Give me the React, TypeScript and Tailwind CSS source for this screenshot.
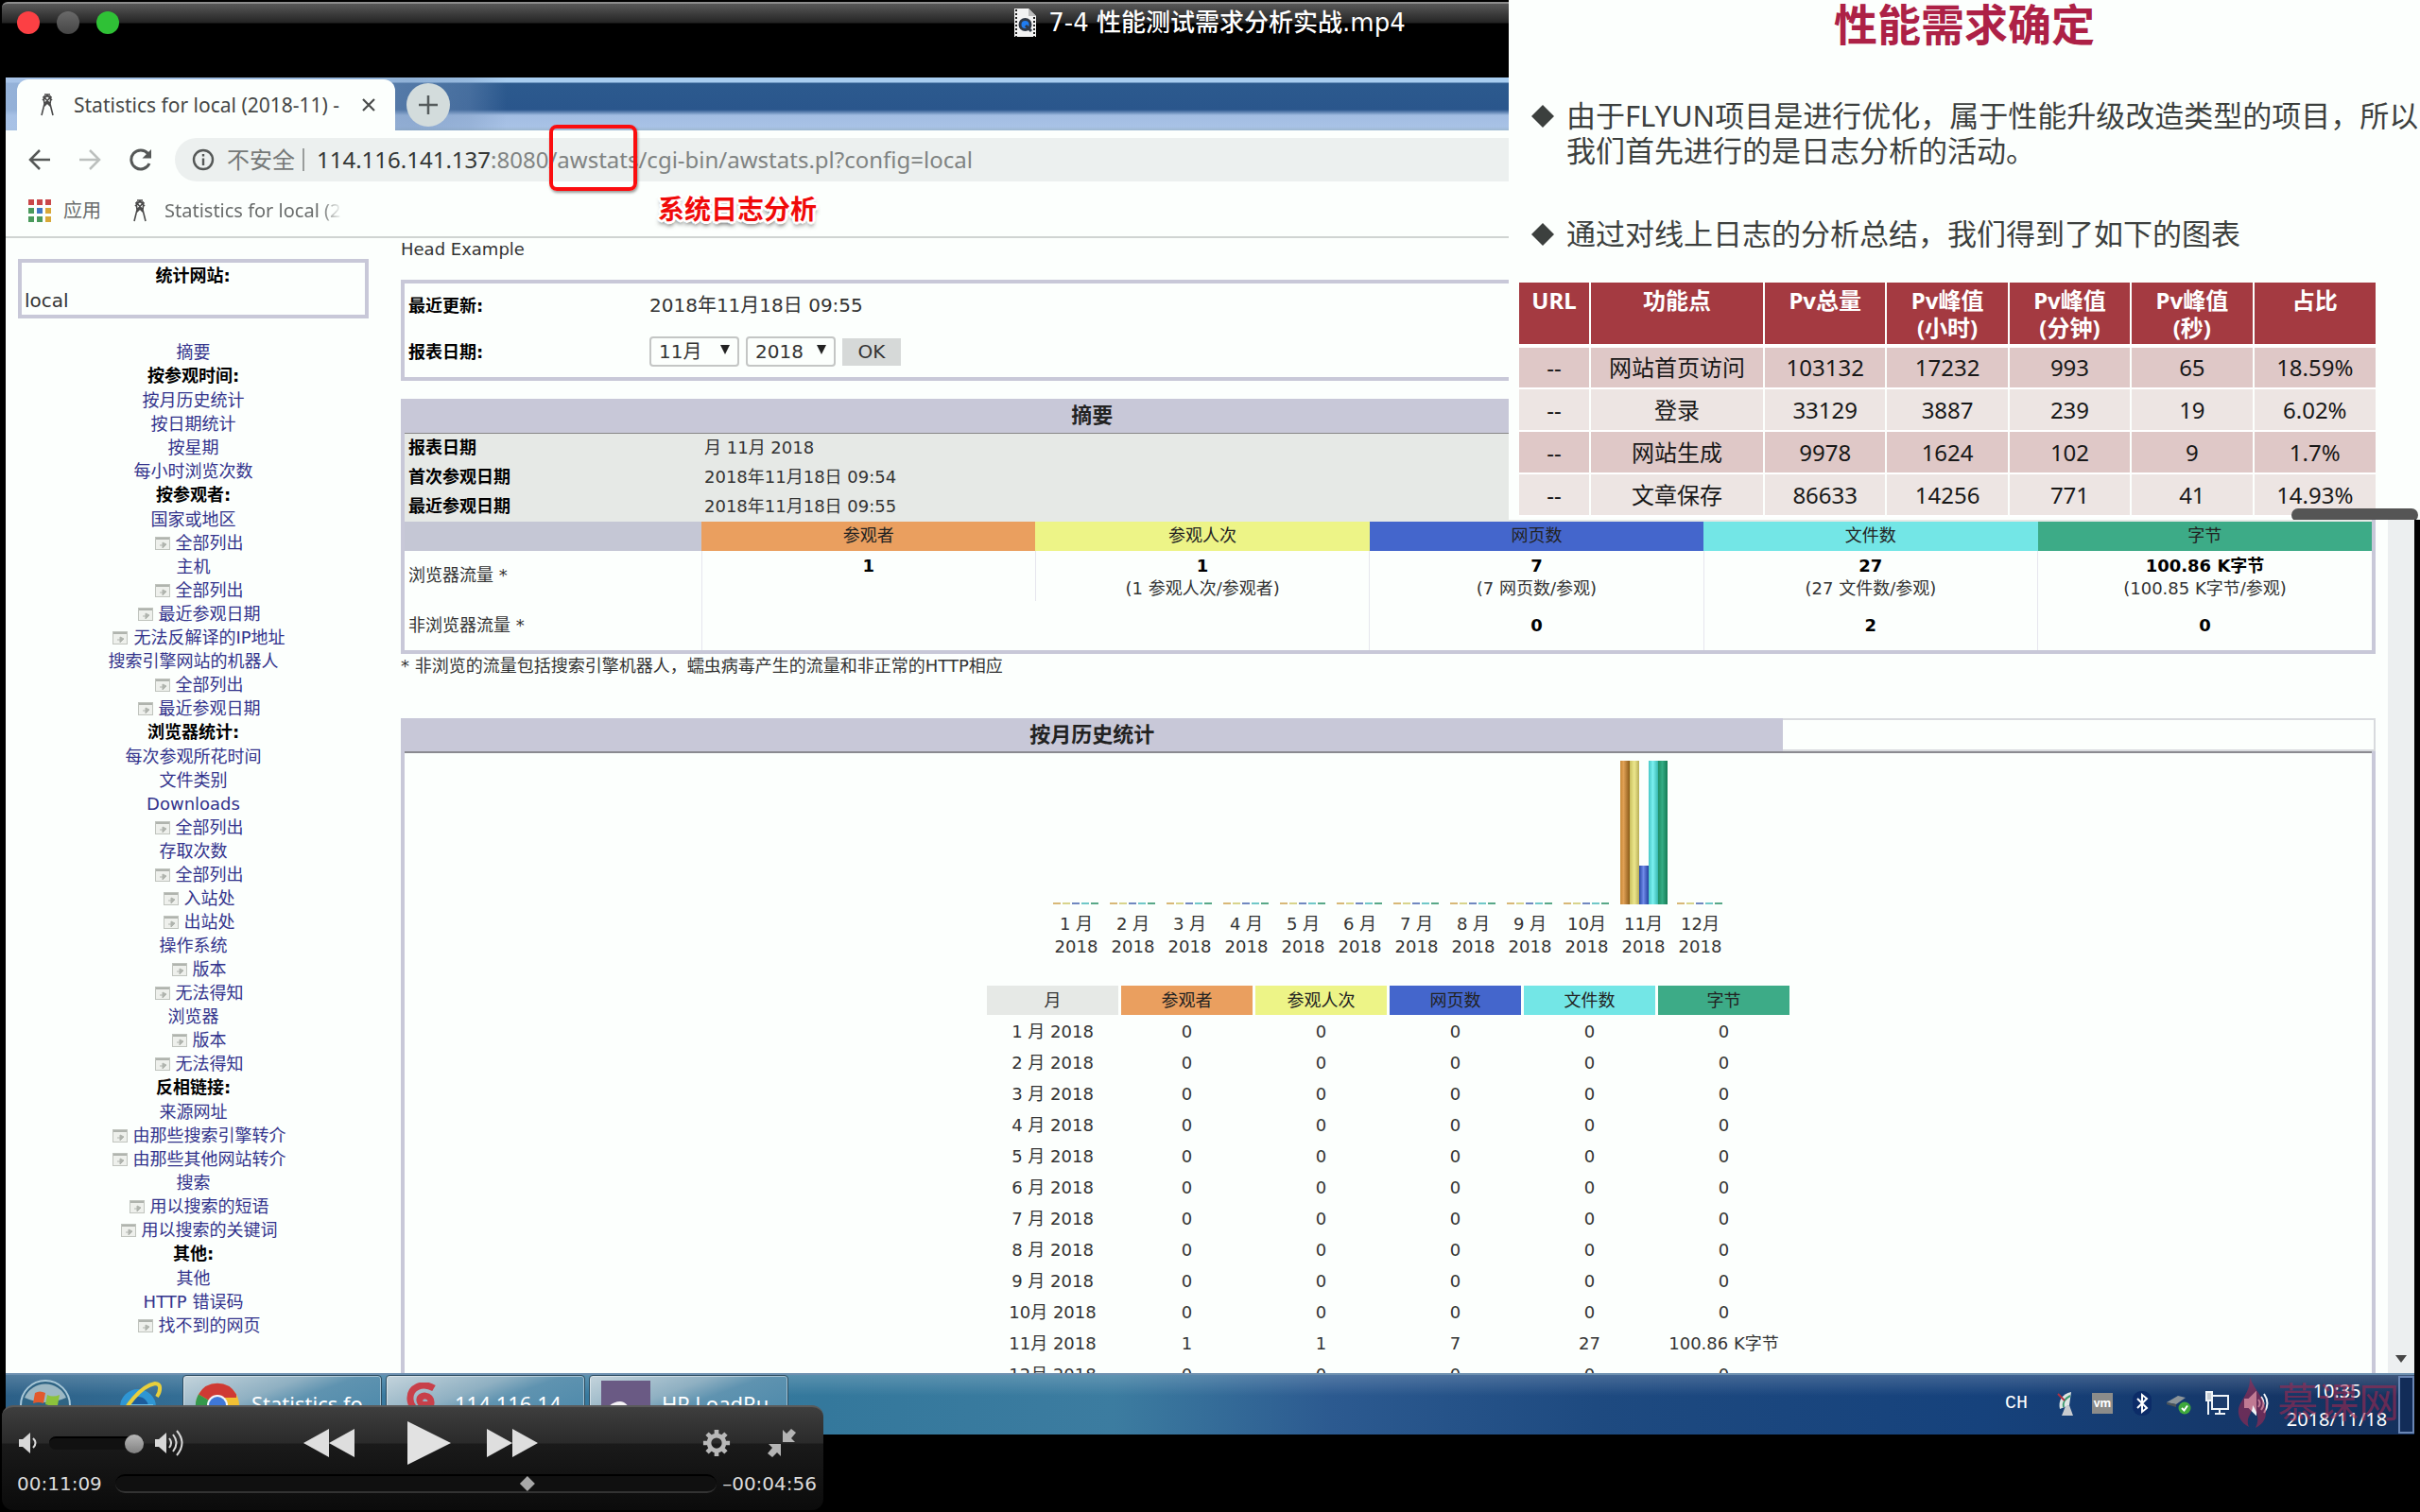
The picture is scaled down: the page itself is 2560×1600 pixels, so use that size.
import React from "react";

const CJK = "font-['DejaVu_Sans','Noto_Sans_CJK_SC',sans-serif]";
const UI = "font-['Noto_Sans','Noto_Sans_CJK_SC',sans-serif]";

type NavItem = { text: string; kind: "link" | "head" | "sub" };

const nav: NavItem[] = [
  { text: "摘要", kind: "link" },
  { text: "按参观时间:", kind: "head" },
  { text: "按月历史统计", kind: "link" },
  { text: "按日期统计", kind: "link" },
  { text: "按星期", kind: "link" },
  { text: "每小时浏览次数", kind: "link" },
  { text: "按参观者:", kind: "head" },
  { text: "国家或地区", kind: "link" },
  { text: "全部列出", kind: "sub" },
  { text: "主机", kind: "link" },
  { text: "全部列出", kind: "sub" },
  { text: "最近参观日期", kind: "sub" },
  { text: "无法反解译的IP地址", kind: "sub" },
  { text: "搜索引擎网站的机器人", kind: "link" },
  { text: "全部列出", kind: "sub" },
  { text: "最近参观日期", kind: "sub" },
  { text: "浏览器统计:", kind: "head" },
  { text: "每次参观所花时间", kind: "link" },
  { text: "文件类别", kind: "link" },
  { text: "Downloads", kind: "link" },
  { text: "全部列出", kind: "sub" },
  { text: "存取次数", kind: "link" },
  { text: "全部列出", kind: "sub" },
  { text: "入站处", kind: "sub" },
  { text: "出站处", kind: "sub" },
  { text: "操作系统", kind: "link" },
  { text: "版本", kind: "sub" },
  { text: "无法得知", kind: "sub" },
  { text: "浏览器", kind: "link" },
  { text: "版本", kind: "sub" },
  { text: "无法得知", kind: "sub" },
  { text: "反相链接:", kind: "head" },
  { text: "来源网址", kind: "link" },
  { text: "由那些搜索引擎转介", kind: "sub" },
  { text: "由那些其他网站转介", kind: "sub" },
  { text: "搜索", kind: "link" },
  { text: "用以搜索的短语", kind: "sub" },
  { text: "用以搜索的关键词", kind: "sub" },
  { text: "其他:", kind: "head" },
  { text: "其他", kind: "link" },
  { text: "HTTP 错误码", kind: "link" },
  { text: "找不到的网页", kind: "sub" },
];

const months = ["1 月", "2 月", "3 月", "4 月", "5 月", "6 月", "7 月", "8 月", "9 月", "10月", "11月", "12月"];

const metrics = [
  { name: "参观者", bg: "bg-[#ea9f5f]" },
  { name: "参观人次", bg: "bg-[#edf487]" },
  { name: "网页数", bg: "bg-[#4466cc]" },
  { name: "文件数", bg: "bg-[#73e6e6]" },
  { name: "字节", bg: "bg-[#3dab87]" },
];

const bars = [
  { height: 152, cls: "bg-[linear-gradient(90deg,#c98a38,#e0a055_35%,#8a5a18)]" },
  { height: 152, cls: "bg-[linear-gradient(90deg,#c9c060,#ece68c_50%,#b8ae58)]" },
  { height: 41, cls: "bg-[linear-gradient(90deg,#2a48a8,#6f8be8_45%,#2540a0)]" },
  { height: 152, cls: "bg-[linear-gradient(90deg,#48c8c8,#7af0f0_45%,#38b8b0)]" },
  { height: 152, cls: "bg-[linear-gradient(90deg,#1f8f66,#34ac84_45%,#157a54)]" },
];

const stubs = ["bg-[#d8b878]", "bg-[#d8d48c]", "bg-[#7088c0]", "bg-[#70c8c8]", "bg-[#58a888]"];

const slideHead = [
  ["URL"],
  ["功能点"],
  ["Pv总量"],
  ["Pv峰值", "(小时)"],
  ["Pv峰值", "(分钟)"],
  ["Pv峰值", "(秒)"],
  ["占比"],
];

const slideRows = [
  ["--", "网站首页访问", "103132", "17232", "993", "65", "18.59%"],
  ["--", "登录", "33129", "3887", "239", "19", "6.02%"],
  ["--", "网站生成", "9978", "1624", "102", "9", "1.7%"],
  ["--", "文章保存", "86633", "14256", "771", "41", "14.93%"],
];

function Tower({ className }: { className: string }) {
  return (
    <svg className={className} viewBox="0 0 16 24" fill="none" stroke="#4a4a4a" strokeWidth="1.600">
      <path d="M4 3 H12 M4 3 L5 11 L2 23 M12 3 L11 11 L14 23 M4 3 L11 11 M12 3 L5 11 M5 1 H11 M3 7 L8 2 L13 7 M5 11 L8 9 L11 11 M4 14 L8 10 L12 14" />
    </svg>
  );
}

function WindowIcon() {
  return (
    <svg className="h-[14px] w-[16px]" viewBox="0 0 16 14" fill="none">
      <rect x="0.500" y="0.500" width="15" height="13" fill="#eef0ec" stroke="#c0c4be" />
      <path d="M1 2 H15" stroke="#b0b4ae" strokeWidth="2" />
      <path d="M5 9 H9 M8 6 V12 L12 8 Z" stroke="#b0b4ae" fill="#b0b4ae" />
    </svg>
  );
}

function TitleBar() {
  return (
    <header className="h-[82px] shrink-0 bg-black px-[2px] pt-[2px]">
      <div className="flex h-[42px] items-center rounded-tl-md border-t-2 border-[#8c8c8c] bg-[linear-gradient(#585858,#242424_20px,#000_21px)] px-4">
        <div className="flex flex-1 gap-[18px]">
          <button aria-label="关闭" className="size-6 rounded-full bg-[#fc4044]" />
          <button aria-label="最小化" className="size-6 rounded-full bg-[linear-gradient(#6a6a6a,#454545)]" />
          <button aria-label="全屏" className="size-6 rounded-full bg-[#2fc136]" />
        </div>
        <div className="flex items-center gap-[13px]">
          <svg className="h-[30px] w-[23px]" viewBox="0 0 23 30">
            <path d="M0 0 H15 L23 8 V30 H0 Z" fill="#f2f2f2" />
            <path d="M15 0 V8 H23 Z" fill="#bdbdbd" />
            <path d="M2 1 V30 M21 9 V30" stroke="#222" strokeWidth="2" strokeDasharray="2 2" />
            <circle cx="11.500" cy="17" r="7" fill="#303844" />
            <circle cx="11.500" cy="17" r="4" fill="#1f7cf0" />
            <path d="M12 18 L18 24" stroke="#303844" strokeWidth="3" />
          </svg>
          <h1 className={`${CJK} text-[26px] leading-[38px] font-medium whitespace-nowrap text-white`}>
            7-4 性能测试需求分析实战.mp4
          </h1>
        </div>
        <div className="flex-1" />
      </div>
    </header>
  );
}

function TabStrip() {
  return (
    <div className="flex h-[56px] shrink-0 items-end bg-[linear-gradient(90deg,rgba(168,194,230,0.85)_0,rgba(120,150,190,0.5)_430px,rgba(120,150,190,0.35)_490px,transparent_530px),linear-gradient(#a8cdf0_0,#a8cdf0_5px,#2c5a8e_6px,#2a568c_34px,#a2bde2_40px,#a8c2e6_52px,#9db8d0_56px)] pl-[12px]">
      <div className="flex h-[54px] w-[400px] items-center rounded-t-xl bg-[#fcfffd] pr-4 pl-6">
        <Tower className="h-[24px] w-[16px]" />
        <span className={`${UI} ml-[20px] flex-1 text-[21px] leading-7 whitespace-nowrap text-[#454746]`}>
          Statistics for local (2018-11) -
        </span>
        <button aria-label="关闭标签页" className="flex size-6 items-center justify-center">
          <svg className="size-4" viewBox="0 0 16 16" stroke="#4a4c4b" strokeWidth="2.200">
            <path d="M2 2 L14 14 M14 2 L2 14" />
          </svg>
        </button>
      </div>
      <button aria-label="新标签页" className="mb-1 ml-3 flex size-[46px] items-center justify-center rounded-full bg-[#d3dcdc]">
        <svg className="size-5" viewBox="0 0 20 20" stroke="#555b5c" strokeWidth="2.500">
          <path d="M10 0 V20 M0 10 H20" />
        </svg>
      </button>
    </div>
  );
}

function Toolbar() {
  return (
    <div className="relative shrink-0 border-b-2 border-[#d0d4d2] bg-[#fcfffd] pb-[2px]">
      <div className="flex h-[62px] items-center pl-6">
        <button aria-label="后退">
          <svg className="size-6" viewBox="0 0 24 24" fill="none" stroke="#555857" strokeWidth="2.500">
            <path d="M23 12 H3 M12 2 L2 12 L12 22" />
          </svg>
        </button>
        <button aria-label="前进" className="ml-[29px]">
          <svg className="size-6" viewBox="0 0 24 24" fill="none" stroke="#bcc0be" strokeWidth="2.500">
            <path d="M1 12 H21 M12 2 L22 12 L12 22" />
          </svg>
        </button>
        <button aria-label="重新加载" className="ml-[30px]">
          <svg className="size-6" viewBox="0 0 24 24" fill="none" stroke="#555857" strokeWidth="3">
            <path d="M21 16 A10 10 0 1 1 19.500 5.500" />
            <path d="M23 1 V10.500 H13.500 Z" fill="#555857" stroke="none" />
          </svg>
        </button>
        <div className={`${UI} ml-6 flex h-[46px] flex-1 items-center rounded-l-full bg-[#ecf0ef] pl-[18px] text-[24px] leading-8`}>
          <svg className="size-6" viewBox="0 0 24 24" fill="none" stroke="#555857" strokeWidth="2.400">
            <circle cx="12" cy="12" r="10" />
            <path d="M12 10.500 V18 M12 6 V8.500" />
          </svg>
          <span className="ml-[13px] text-[#757877]">不安全</span>
          <span className="mx-[8px] h-6 w-[2px] bg-[#9a9d9c]" />
          <label htmlFor="address" className="ml-[5px] text-[#333635]">
            114.116.141.137
          </label>
          <input
            id="address"
            className="w-[600px] bg-transparent text-[#808382] outline-none"
            defaultValue=":8080/awstats/cgi-bin/awstats.pl?config=local"
          />
        </div>
      </div>
      <div className={`${UI} flex h-[46px] items-center pl-6 text-[20px] leading-7 text-[#6a6d6c]`}>
        <svg className="size-6" viewBox="0 0 24 24">
          <path d="M0 0h6v6H0zM9 0h6v6H9zM18 0h6v6h-6z" fill="#c9484a" />
          <path d="M0 9h6v6H0z" fill="#4a9a5c" />
          <path d="M9 9h6v6H9z" fill="#3f78c4" />
          <path d="M18 9h6v6h-6z" fill="#d8a838" />
          <path d="M0 18h6v6H0zM9 18h6v6H9z" fill="#4a9a5c" />
          <path d="M18 18h6v6h-6z" fill="#d8a838" />
        </svg>
        <a href="#apps" className="ml-[13px]">应用</a>
        <Tower className="ml-[33px] h-6 w-4" />
        <a
          href="#stats"
          className="ml-[18px] w-[188px] overflow-hidden [mask-image:linear-gradient(90deg,#000_165px,transparent)] whitespace-nowrap"
        >
          Statistics for local (2
        </a>
      </div>
      <div className="h-[2px]" />
      <div className="absolute top-[-6px] left-[575px] h-[70px] w-[93px] rounded-lg border-4 border-[#fb0d0f] shadow-[1px_2px_3px_rgba(0,0,0,0.4)]" />
      <span
        className={`${UI} absolute top-[63px] left-[690px] text-[28px] leading-10 font-bold text-[#f00a0a] [text-shadow:3px_0_#fff,-3px_0_#fff,0_3px_#fff,0_-3px_#fff,2px_2px_#fff,-2px_-2px_#fff,2px_-2px_#fff,-2px_2px_#fff,0_4px_5px_rgba(0,0,0,0.8)]`}
      >
        系统日志分析
      </span>
    </div>
  );
}

function Sidebar() {
  return (
    <aside className="w-[418px] shrink-0 pt-[22px] pr-[34px] pl-[13px]">
      <div className="h-[63px] border-4 border-[#c8c8d8] pr-1 pl-[3px]">
        <div className="text-center leading-[27px] font-bold text-black">统计网站:</div>
        <div className="text-[20px] leading-[27px]">local</div>
      </div>
      <ul className="pt-[23px] text-center">
        {nav.map((item, i) =>
          item.kind === "head" ? (
            <li key={i} className="leading-[26px] font-bold text-black">
              {item.text}
            </li>
          ) : (
            <li key={i} className="leading-[25px]">
              {item.kind === "sub" ? (
                <a href="#report" className="flex items-center justify-center gap-[6px] pl-3 text-[#33338c]">
                  <WindowIcon />
                  {item.text}
                </a>
              ) : (
                <a href="#report" className="text-[#33338c]">
                  {item.text}
                </a>
              )}
            </li>
          ),
        )}
      </ul>
    </aside>
  );
}

function Picker({ id, label, value }: { id: string; label: string; value: string }) {
  return (
    <span className="relative">
      <select
        id={id}
        aria-label={label}
        defaultValue={value}
        className="h-[32px] w-[95px] appearance-none rounded-sm border-2 border-[#c4c6c5] bg-[#fcfffd] pl-2 text-[20px] leading-6"
      >
        <option>{value}</option>
      </select>
      <svg className="pointer-events-none absolute top-[9px] right-[10px] h-[10px] w-[10px]" viewBox="0 0 10 10">
        <path d="M0 0 H10 L5 10 Z" fill="#222" />
      </svg>
    </span>
  );
}

function Summary() {
  const row1 = [
    ["1", ""],
    ["1", "(1 参观人次/参观者)"],
    ["7", "(7 网页数/参观)"],
    ["27", "(27 文件数/参观)"],
    ["100.86 K字节", "(100.85 K字节/参观)"],
  ];
  return (
    <section className="mt-[19px]">
      <h2 className="h-[36px] w-[70%] bg-[#c8c8d8] text-center text-[22px] leading-[36px] font-bold text-[#222]">摘要</h2>
      <div className="border-x-4 border-b-4 border-[#c8c8d8]">
        <table className="w-full table-fixed border-collapse border-t border-[#888]">
          <colgroup>
            <col className="w-[314px]" />
            <col />
            <col />
            <col />
            <col />
            <col />
          </colgroup>
          <tbody>
            {[
              ["报表日期", "月 11月 2018"],
              ["首次参观日期", "2018年11月18日 09:54"],
              ["最近参观日期", "2018年11月18日 09:55"],
            ].map(([a, b]) => (
              <tr key={a} className="h-[31px] bg-[#e6e9e6] leading-[30px]">
                <th scope="row" className="pl-[4px] text-left font-bold text-black">
                  {a}
                </th>
                <td colSpan={5} className="pl-[3px]">
                  {b}
                </td>
              </tr>
            ))}
            <tr className="h-[31px] leading-[30px]">
              <td className="bg-[#c5c7d5]" />
              {metrics.map((m) => (
                <th key={m.name} scope="col" className={`${m.bg} font-normal text-[#222]`}>
                  {m.name}
                </th>
              ))}
            </tr>
            <tr className="h-[53px] leading-[24px]">
              <td className="pl-[4px]">浏览器流量 *</td>
              {row1.map(([a, b], i) => (
                <td key={i} className="border-l border-[#e6e6ee] pt-[4px] text-center align-top">
                  <b className="text-black">{a}</b>
                  <div>{b}</div>
                </td>
              ))}
            </tr>
            <tr className="h-[52px]">
              <td className="pl-[4px]">非浏览器流量 *</td>
              <td colSpan={2} className="border-l border-[#e6e6ee]" />
              {["0", "2", "0"].map((v, i) => (
                <td key={i} className="border-l border-[#e6e6ee] text-center font-bold text-black">
                  {v}
                </td>
              ))}
            </tr>
          </tbody>
        </table>
      </div>
      <p className="leading-[26px]">* 非浏览的流量包括搜索引擎机器人，蠕虫病毒产生的流量和非正常的HTTP相应</p>
    </section>
  );
}

function Monthly() {
  return (
    <section className="mt-[42px]">
      <div className="flex h-[35px]">
        <h2 className="w-[70%] bg-[#c8c8d8] text-center text-[22px] leading-[36px] font-bold text-[#222]">按月历史统计</h2>
        <div className="flex-1 border-2 border-l-0 border-[#d8dade]" />
      </div>
      <div className="flex flex-col items-center border-x-4 border-[#c8c8d8]">
        <div className="h-[2px] w-full bg-[#8a8a90]" />
        <div className="mt-[8px] flex">
          {months.map((m) => (
            <div key={m} className="flex w-[60px] flex-col items-center leading-[24px]">
              <div className="flex h-[152px] items-end">
                {m === "11月"
                  ? bars.map((b, i) => <span key={i} className={`${b.cls} w-[10px]`} style={{ height: b.height }} />)
                  : stubs.map((s, i) => <span key={i} className={`${s} mr-[2px] h-[2px] w-[8px]`} />)}
              </div>
              <span className="mt-[9px]">{m}</span>
              <span>2018</span>
            </div>
          ))}
        </div>
        <table className="mt-[26px] table-fixed border-separate border-spacing-[3px] text-center">
          <thead>
            <tr className="h-[31px]">
              <th className="w-[139px] bg-[#e6e9e6] font-normal">月</th>
              {metrics.map((m) => (
                <th key={m.name} className={`${m.bg} w-[139px] font-normal text-[#222]`}>
                  {m.name}
                </th>
              ))}
            </tr>
          </thead>
          <tbody>
            {months.map((m) => (
              <tr key={m} className="h-[30px] leading-[28px]">
                <td>{m} 2018</td>
                {(m === "11月" ? ["1", "1", "7", "27", "100.86 K字节"] : ["0", "0", "0", "0", "0"]).map((v, i) => (
                  <td key={i}>{v}</td>
                ))}
              </tr>
            ))}
          </tbody>
        </table>
      </div>
    </section>
  );
}

function StatsPage() {
  return (
    <div className={`${CJK} flex min-h-0 flex-1 overflow-hidden bg-[#fcfffd] text-[18px] text-[#333]`}>
      <Sidebar />
      <main className="min-w-0 flex-1 pr-[13px]">
        <p className="leading-[24px]">Head Example</p>
        <form className="mt-[20px] h-[107px] border-4 border-[#c8c8d8] pl-[4px]">
          <div className="flex h-[46px] items-center">
            <span className="w-[255px] font-bold text-black">最近更新:</span>
            <span className="text-[20px]">2018年11月18日 09:55</span>
          </div>
          <div className="flex h-[52px] items-center">
            <label htmlFor="month" className="w-[255px] font-bold text-black">
              报表日期:
            </label>
            <div className="flex items-center gap-[7px]">
              <Picker id="month" label="月份" value="11月" />
              <Picker id="year" label="年份" value="2018" />
              <button type="button" className="h-[29px] w-[62px] bg-[#d6d9d8] text-[20px] leading-[28px]">
                OK
              </button>
            </div>
          </div>
        </form>
        <Summary />
        <Monthly />
      </main>
      <div className="flex w-[28px] shrink-0 flex-col items-center justify-end bg-[#eceff0] pb-[11px]">
        <svg className="h-[8px] w-[12px]" viewBox="0 0 12 8">
          <path d="M0 0 H12 L6 8 Z" fill="#454545" />
        </svg>
      </div>
    </div>
  );
}

function TaskButton({ icon, text }: { icon: React.ReactNode; text: string }) {
  return (
    <button className="flex h-full w-[211px] items-center gap-3 rounded-sm border border-[#2c4c60] bg-[linear-gradient(160deg,#c4d4dc_0%,#8fb0c2_35%,#5f93b0_50%,#4585a8_100%)] pl-3 text-white shadow-[inset_0_0_0_1px_rgba(255,255,255,0.45)]">
      {icon}
      <span className="pb-[4px] whitespace-nowrap">{text}</span>
    </button>
  );
}

function Taskbar() {
  return (
    <footer
      className={`${UI} relative flex h-[65px] shrink-0 items-center border-t-2 border-[#6d90b0] bg-[linear-gradient(rgba(255,255,255,0.18),rgba(255,255,255,0)_22px),linear-gradient(90deg,#2c6088_0%,#3a7aa0_14%,#34789c_34%,#3c7ca0_46%,#2c5a90_55%,#1e4a80_66%,#16427c_82%,#14305c_100%)] text-[22px] leading-[30px]`}
    >
      <button aria-label="开始" className="ml-[14px]">
        <svg className="size-[56px]" viewBox="0 0 56 56">
          <circle cx="28" cy="28" r="26" fill="#2f6484" stroke="#a9c8d8" strokeWidth="2" />
          <path d="M6 20 A24 24 0 0 1 50 20 Q28 30 6 20 Z" fill="#9cb8c4" />
          <path d="M17 15 Q22 12 28 15 L26 26 Q21 24 15 26 Z" fill="#e2592c" />
          <path d="M30 17 Q36 20 43 17 L41 28 Q35 30 28 27 Z" fill="#8cc23c" />
          <path d="M14 29 Q20 27 26 29 L24 39 Q18 36 12 39 Z" fill="#3f8ed4" />
          <path d="M28 30 Q34 33 40 31 L38 41 Q31 43 26 40 Z" fill="#f4c430" />
        </svg>
      </button>
      <button aria-label="Internet Explorer" className="ml-[44px]">
        <svg className="size-[52px]" viewBox="0 0 52 52" fill="none">
          <circle cx="26" cy="28" r="18" fill="#1c5c9c" />
          <circle cx="26" cy="28" r="15" stroke="#2f96d4" strokeWidth="8" />
          <path d="M14 28 H42" stroke="#6cc0ea" strokeWidth="6" />
          <path d="M6 44 C12 28 28 6 44 3 C51 3 50 11 46 17" stroke="#e8cf3c" strokeWidth="4" />
        </svg>
      </button>
      <div className="ml-[21px] flex h-full gap-[4px]">
        <TaskButton
          text="Statistics fo..."
          icon={
            <svg className="size-[48px]" viewBox="0 0 48 48">
              <circle cx="24" cy="24" r="23" fill="#f2c034" />
              <path d="M24 24 L4 12.500 A23 23 0 0 1 44 12.500 L44 16 H24 Z" fill="#cf3a34" />
              <path d="M24 24 L4 12.500 A23 23 0 0 0 22 47 L31 30 Z" fill="#35984c" />
              <circle cx="24" cy="24" r="11" fill="#f4f6f8" />
              <circle cx="24" cy="24" r="9" fill="#3f78d8" />
            </svg>
          }
        />
        <TaskButton
          text="114.116.14..."
          icon={
            <svg className="size-[48px]" viewBox="0 0 48 48" fill="none">
              <path d="M38 6 C26 -1 12 5 13 18 C14 32 34 34 35 22 C36 12 22 12 23 19 C24 24 29 24 29 20" stroke="#c8404a" strokeWidth="7" />
              <path d="M16 40 C24 46 34 44 38 36" stroke="#b02c36" strokeWidth="5" />
            </svg>
          }
        />
        <TaskButton
          text="HP LoadRu..."
          icon={
            <svg className="size-[52px]" viewBox="0 0 52 52">
              <rect width="52" height="52" fill="#6a5a84" />
              <path d="M2 40 C4 28 12 22 20 22 C30 23 32 34 30 44 L40 52 H20 C18 42 14 36 10 38 Z" fill="#f4f2f6" />
            </svg>
          }
        />
      </div>
      <div className="ml-auto flex h-full items-center text-white">
        <div className="flex items-center pb-[4px]">
          <span className="mr-[30px] font-['Liberation_Mono',monospace] text-[20px] leading-6">CH</span>
          <svg className="mr-[18px] h-[28px] w-[20px]" viewBox="0 0 20 28">
            <path d="M16 2 C6 4 2 12 4 20 L14 16 Z" fill="#dfe6e4" />
            <path d="M15 6 C9 9 7 14 8 18" stroke="#3a9a70" strokeWidth="2" fill="none" />
            <path d="M2 4 L9 11" stroke="#b03040" strokeWidth="2" />
            <path d="M10 17 L6 27 H18 L14 16 Z" fill="#c8ccd0" />
          </svg>
          <span className="mr-[21px] flex size-[22px] items-center justify-center bg-[#8c8c8a] text-[12px] leading-4 font-bold">vm</span>
          <svg className="mr-[16px] h-[26px] w-[20px]" viewBox="0 0 20 26" fill="none">
            <rect width="20" height="26" rx="9" fill="#0c2c68" />
            <path d="M5 8 L15 18 L10 22 V4 L15 8 L5 18" stroke="#fff" strokeWidth="2" />
          </svg>
          <svg className="mr-[14px] h-[26px] w-[26px]" viewBox="0 0 26 26" fill="none">
            <path d="M0 12 L12 5 L20 7 L10 14 Z" fill="#8c9498" />
            <path d="M0 12 L10 14 V17 L0 14 Z" fill="#4c5458" />
            <circle cx="19" cy="18" r="6.500" fill="#3fa83c" />
            <path d="M16 18 L18.500 20.500 L22 15.500" stroke="#fff" strokeWidth="2" />
          </svg>
          <svg className="mr-[16px] h-[26px] w-[26px]" viewBox="0 0 26 26" fill="none" stroke="#f0f4f8" strokeWidth="2">
            <rect x="8" y="5" width="17" height="14" fill="#1c3c6c" />
            <path d="M11 24 H22 M16 19 V24 M4 10 V25" />
            <rect x="2" y="1" width="6" height="9" fill="#c4ccd4" />
          </svg>
          <svg className="mr-[16px] h-[26px] w-[26px]" viewBox="0 0 26 26" fill="none" stroke="#f0f4f8" strokeWidth="2">
            <path d="M1 9 H5 L12 2 V24 L5 17 H1 Z" fill="#f0f4f8" />
            <path d="M15 9 Q18 13 15 17 M18 6 Q23 13 18 20 M21 3 Q28 13 21 23" />
          </svg>
        </div>
        <div className="mr-[9px] flex w-[112px] flex-col items-center text-[20px] leading-[30px]">
          <span>10:35</span>
          <span>2018/11/18</span>
        </div>
        <button aria-label="显示桌面" className="h-[61px] w-[17px] border-2 border-[#6a86b4] bg-[#122c58]" />
      </div>
      <div className="pointer-events-none absolute top-0 right-[16px] flex items-center gap-[12px] text-[#a02850]/60">
        <svg className="h-[54px] w-[30px]" viewBox="0 0 30 54" fill="currentColor">
          <path d="M13 0 C17 14 30 22 30 38 C30 46 25 51 19 54 C24 44 20 36 16 30 C16 40 8 42 12 53 C4 49 0 42 1 34 C3 24 14 16 13 0 Z" />
        </svg>
        <span className="text-[43px] leading-[58px]">慕课网</span>
      </div>
    </footer>
  );
}

function Slide() {
  return (
    <section className={`${UI} absolute top-0 right-0 h-[550px] w-[964px] overflow-hidden bg-[#fcfffd] text-[#3c403e]`}>
      <h2 className="text-center text-[46px] leading-[50px] font-bold text-[#ad2146]">性能需求确定</h2>
      <ul className="mt-[54px] flex flex-col gap-[51px] pl-[24px] text-[31px] leading-[37px] whitespace-nowrap">
        <li className="flex gap-[13px]">
          <svg className="mt-[7px] h-[24px] w-[24px]" viewBox="0 0 24 24">
            <path d="M12 0 L24 12 L12 24 L0 12 Z" fill="#3c403e" />
          </svg>
          <p>
            由于FLYUN项目是进行优化，属于性能升级改造类型的项目，所以
            <br />
            我们首先进行的是日志分析的活动。
          </p>
        </li>
        <li className="flex gap-[13px]">
          <svg className="mt-[7px] h-[24px] w-[24px]" viewBox="0 0 24 24">
            <path d="M12 0 L24 12 L12 24 L0 12 Z" fill="#3c403e" />
          </svg>
          <p>通过对线上日志的分析总结，我们得到了如下的图表</p>
        </li>
      </ul>
      <table className="mt-[33px] ml-[11px] w-[906px] table-fixed border-collapse text-center text-[24px]">
        <colgroup>
          <col className="w-[75px]" />
          <col className="w-[184px]" />
          <col />
          <col />
          <col />
          <col />
          <col />
        </colgroup>
        <thead>
          <tr className="h-[67px] border-b-4 border-white bg-[#a43a41] leading-[29px] text-white">
            {slideHead.map((lines, i) => (
              <th key={i} className="border-r-2 border-[#fcfffd] pt-[4px] align-top font-bold last:border-r-0">
                {lines.map((l) => (
                  <div key={l}>{l}</div>
                ))}
              </th>
            ))}
          </tr>
        </thead>
        <tbody>
          {slideRows.map((r) => (
            <tr key={r[1]} className="h-[45px] border-b-2 border-white leading-[36px] text-[#181818] odd:bg-[#dfc8c7] even:bg-[#ede5e3]">
              {r.map((c, i) => (
                <td key={i} className="border-r-2 border-[#fcfffd] last:border-r-0">
                  {c}
                </td>
              ))}
            </tr>
          ))}
        </tbody>
      </table>
      <div className="absolute right-[2px] bottom-[-2px] h-[14px] w-[134px] rounded-full bg-[#555]" />
    </section>
  );
}

function Hud() {
  return (
    <section
      className={`${CJK} absolute bottom-[2px] left-[2px] flex h-[111px] w-[869px] flex-col rounded-xl border-t-2 border-[#5a5a5a] bg-[linear-gradient(#3e3e3e,#2a2a2a_38px,#1a1a1a_39px,#0b0b0b)] text-[20px] leading-7 text-[#dcdcdc]`}
    >
      <div className="flex h-[67px] items-center pt-2 pl-[18px]">
        <svg className="h-[22px] w-[20px]" viewBox="0 0 20 22" fill="#d8d8d8">
          <path d="M0 7 H4 L12 0 V22 L4 15 H0 Z" />
          <path d="M15 6 Q20 11 15 16" stroke="#d8d8d8" strokeWidth="2" fill="none" />
        </svg>
        <input
          type="range"
          aria-label="音量"
          defaultValue={100}
          className="ml-[12px] h-[14px] w-[100px] appearance-none rounded-full border-t-2 border-black bg-[#111] [&::-webkit-slider-thumb]:size-5 [&::-webkit-slider-thumb]:appearance-none [&::-webkit-slider-thumb]:rounded-full [&::-webkit-slider-thumb]:bg-[linear-gradient(#b8b8b8,#808080)]"
        />
        <svg className="ml-[12px] h-[28px] w-[30px]" viewBox="0 0 30 28" fill="#d8d8d8">
          <path d="M0 10 H4 L12 3 V25 L4 18 H0 Z" />
          <path d="M15 9 Q19 14 15 19 M19 5 Q26 14 19 23 M23 1 Q34 14 23 27" stroke="#d8d8d8" strokeWidth="2" fill="none" />
        </svg>
        <button aria-label="快退" className="ml-[127px]">
          <svg className="h-[30px] w-[54px]" viewBox="0 0 54 30" fill="#dedede">
            <path d="M27 0 V30 L0 15 Z M54 0 V30 L27 15 Z" />
          </svg>
        </button>
        <button aria-label="播放" className="ml-[56px]">
          <svg className="h-[46px] w-[46px]" viewBox="0 0 46 46" fill="#e2e2e2">
            <path d="M0 0 L46 23 L0 46 Z" />
          </svg>
        </button>
        <button aria-label="快进" className="ml-[38px]">
          <svg className="h-[30px] w-[54px]" viewBox="0 0 54 30" fill="#dedede">
            <path d="M0 0 L27 15 L0 30 Z M27 0 L54 15 L27 30 Z" />
          </svg>
        </button>
        <button aria-label="设置" className="ml-[174px]">
          <svg className="size-[30px]" viewBox="0 0 32 32" fill="none" stroke="#b8b8b8">
            <circle cx="16" cy="16" r="8.500" strokeWidth="5" />
            <path d="M16 1 V7 M16 25 V31 M1 16 H7 M25 16 H31 M5.400 5.400 L9.600 9.600 M22.400 22.400 L26.600 26.600 M5.400 26.600 L9.600 22.400 M22.400 9.600 L26.600 5.400" strokeWidth="5" />
          </svg>
        </button>
        <button aria-label="退出全屏" className="ml-[39px]">
          <svg className="size-[30px]" viewBox="0 0 30 30" fill="#b4b4b4">
            <path d="M16 14 V1 L20 5 L25 0 L30 4 L25 10 L29 14 Z" />
            <path d="M14 16 V29 L10 25 L5 30 L0 26 L5 20 L1 16 Z" />
          </svg>
        </button>
      </div>
      <div className="flex items-center pr-[7px] pl-[16px]">
        <span>00:11:09</span>
        <input
          type="range"
          aria-label="播放进度"
          defaultValue={69}
          className="mr-[6px] ml-[14px] h-[20px] min-w-0 flex-1 appearance-none rounded-full border-y-2 border-t-black border-b-[#333] bg-[#101010] [&::-webkit-slider-thumb]:size-4 [&::-webkit-slider-thumb]:appearance-none [&::-webkit-slider-thumb]:bg-[#a8a8a8] [&::-webkit-slider-thumb]:[clip-path:polygon(50%_0,100%_50%,50%_100%,0_50%)]"
        />
        <span>–00:04:56</span>
      </div>
    </section>
  );
}

export default function App() {
  return (
    <div className="relative flex h-screen min-h-[1200px] flex-col overflow-hidden bg-black pb-[82px]">
      <TitleBar />
      <div className="mx-[6px] flex min-h-0 flex-1 flex-col overflow-hidden">
        <TabStrip />
        <Toolbar />
        <StatsPage />
        <Taskbar />
      </div>
      <Slide />
      <Hud />
    </div>
  );
}
